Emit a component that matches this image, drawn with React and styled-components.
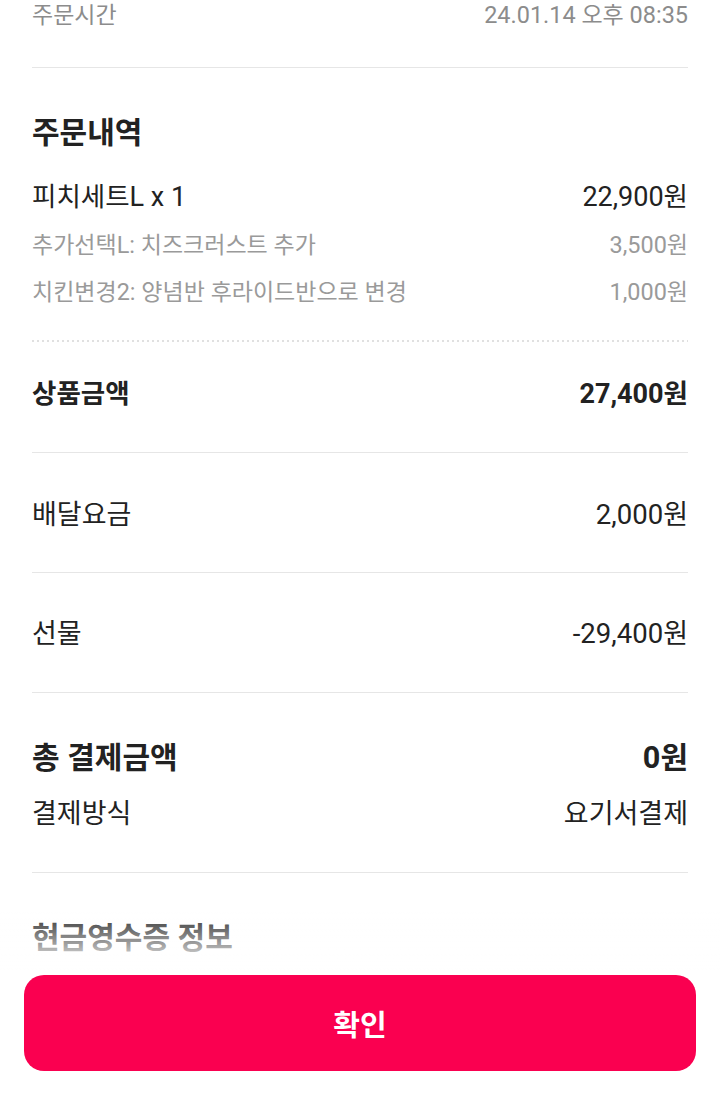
import React from "react";
import styled, { createGlobalStyle } from "styled-components";

const GlobalStyle = createGlobalStyle`
  html, body { margin: 0; padding: 0; background: #ffffff; }
  body {
    font-family: "Noto Sans CJK KR", "Noto Sans", sans-serif;
    -webkit-font-smoothing: antialiased;
  }
  * { box-sizing: border-box; }
`;

const Screen = styled.main`
  min-height: 1104px;
  padding: 0 32px 220px;
  color: #222222;
`;

const Row = styled.div`
  display: flex;
  justify-content: space-between;
  align-items: center;
  white-space: nowrap;
  margin-top: ${(p) => p.$mt || 0}px;
  height: ${(p) => p.$lh}px;
  font-size: ${(p) => p.$size}px;
  line-height: ${(p) => p.$lh}px;
  font-weight: ${(p) => (p.$bold ? 700 : 400)};
  color: ${(p) => p.$color || "#222222"};
`;

const Cell = styled.span`
  display: block;
  height: 100%;
`;

const Lat = styled.span`
  font-family: Roboto, "Liberation Sans", sans-serif;
  font-size: 1.02em;
`;

const Divider = styled.div`
  height: 1px;
  background: #e6e6e6;
  margin-top: ${(p) => p.$mt}px;
`;

const Dotted = styled.div`
  height: 2px;
  margin-top: ${(p) => p.$mt}px;
  background-image: repeating-linear-gradient(
    to right,
    #e0e0e0 0 2px,
    transparent 2px 5px
  );
`;

const Footer = styled.footer`
  position: fixed;
  left: 0;
  right: 0;
  bottom: 0;
  padding: 0 24px 33px;
  background: #ffffff;

  &::before {
    content: "";
    position: absolute;
    left: 0;
    right: 0;
    top: -66px;
    height: 66px;
    background: linear-gradient(
      to bottom,
      rgba(255, 255, 255, 0) 0%,
      rgba(255, 255, 255, 0.7) 65%,
      #ffffff 100%
    );
  }
`;

const ConfirmButton = styled.button`
  display: block;
  width: 100%;
  height: 96px;
  border: 0;
  border-radius: 20px;
  background: #fa0050;
  color: #ffffff;
  font-family: "Noto Sans CJK KR", sans-serif;
  font-size: 29px;
  font-weight: 700;
  cursor: pointer;
`;

const HANGUL = /[\uAC00-\uD7A3]/;
const T = ({ children }) =>
  String(children)
    .split(/([^\uAC00-\uD7A3]+)/)
    .filter(Boolean)
    .map((part, i) =>
      HANGUL.test(part) ? (
        <React.Fragment key={i}>{part}</React.Fragment>
      ) : (
        <Lat key={i}>{part}</Lat>
      )
    );

const Line = ({ label, value, ...rest }) => (
  <Row {...rest}>
    <Cell>
      <T>{label}</T>
    </Cell>
    {value !== undefined && (
      <Cell>
        <T>{value}</T>
      </Cell>
    )}
  </Row>
);

export default function App() {
  return (
    <>
      <GlobalStyle />
      <Screen>
        <Line
          label="주문시간"
          value="24.01.14 오후 08:35"
          $size={23}
          $lh={26}
          $color="#8c8c8c"
        />
        <Divider $mt={41} />

        <Line label="주문내역" $mt={43} $size={30} $lh={38} $bold />
        <Line label="피치세트L x 1" value="22,900원" $mt={29} $size={26.5} $lh={34} />
        <Line
          label="추가선택L: 치즈크러스트 추가"
          value="3,500원"
          $mt={16}
          $size={23}
          $lh={30}
          $color="#9a9a9a"
        />
        <Line
          label="치킨변경2: 양념반 후라이드반으로 변경"
          value="1,000원"
          $mt={17}
          $size={23}
          $lh={30}
          $color="#9a9a9a"
        />
        <Dotted $mt={35} />

        <Line label="상품금액" value="27,400원" $mt={33} $size={26.5} $lh={34} $bold />
        <Divider $mt={43} />

        <Line label="배달요금" value="2,000원" $mt={43} $size={27} $lh={34} />
        <Divider $mt={42} />

        <Line label="선물" value="-29,400원" $mt={42} $size={27} $lh={34} />
        <Divider $mt={43} />

        <Line label="총 결제금액" value="0원" $mt={43} $size={30} $lh={38} $bold />
        <Line label="결제방식" value="요기서결제" $mt={21} $size={27} $lh={34} />
        <Divider $mt={43} />

        <Line label="현금영수증 정보" $mt={43} $size={30} $lh={38} $bold />
      </Screen>
      <Footer>
        <ConfirmButton type="button">확인</ConfirmButton>
      </Footer>
    </>
  );
}
